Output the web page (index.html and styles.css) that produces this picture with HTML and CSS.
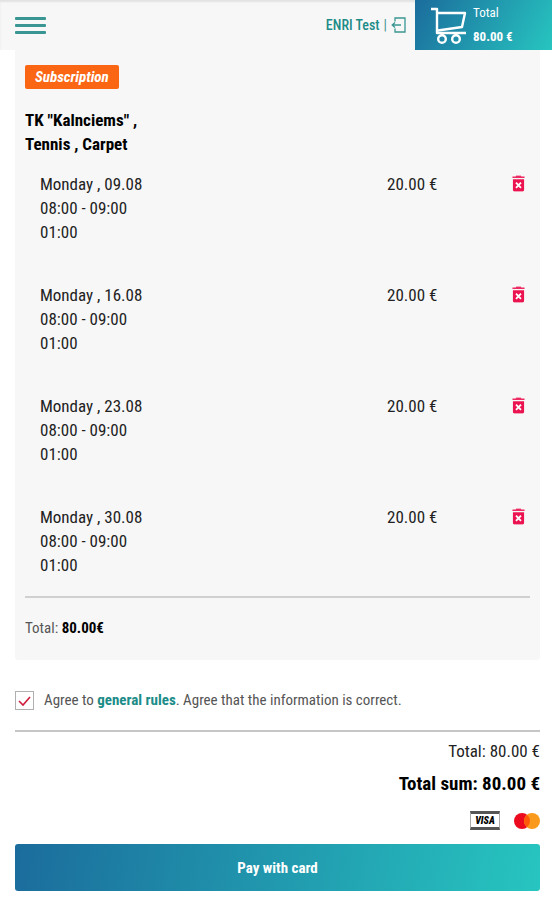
FILE: index.html
```html
<!DOCTYPE html>
<html lang="en">
<head>
	<meta charset="UTF-8">
	<meta name="viewport" content="width=device-width, initial-scale=1.0">
	<title>Cart</title>
	<link rel="stylesheet" href="styles.css">
</head>
<body>

	<header class="header">
		<button class="menu_btn" type="button" aria-label="Menu">
			<span></span>
			<span></span>
			<span></span>
		</button>
		<div class="user">
			<a href="#" class="user_name">ENRI Test</a>
			<span>|</span>
			<a href="#" class="logout" aria-label="Log out">
				<svg width="15" height="16" viewBox="0 0 15 16" fill="none" stroke="#3a9692" stroke-width="1.3">
					<path d="M4 4.5V1H14V15H4V11.5"/>
					<path d="M10 8H1M4 5.5L1.2 8L4 10.5"/>
				</svg>
			</a>
		</div>
		<a href="#" class="cart">
			<svg width="36" height="37" viewBox="0 0 36 37" fill="none" stroke="#fff" stroke-width="2.4" stroke-linejoin="round">
				<path d="M0 2H6V26H35"/>
				<path d="M6 6H34L31 20L7 23.5"/>
				<circle cx="11" cy="32" r="3.8"/>
				<circle cx="25" cy="32" r="3.8"/>
				<path d="M11 28V26M25 28V26"/>
			</svg>
			<span class="cart_text">
				<span>Total</span>
				<b>80.00 €</b>
			</span>
		</a>
	</header>

	<main class="content">
		<section class="card">
			<span class="badge">Subscription</span>
			<h3 class="card_title">TK "Kalnciems" ,<br>Tennis , Carpet</h3>
			<table class="orders">
				<tbody>
					<tr>
						<td>Monday , 09.08<br>08:00 - 09:00<br>01:00</td>
						<td class="price">20.00 €</td>
						<td class="del"><button class="del_btn" type="button" aria-label="Delete"><svg width="13" height="17" viewBox="0 0 14 18"><use href="#trash"/></svg></button></td>
					</tr>
					<tr>
						<td>Monday , 16.08<br>08:00 - 09:00<br>01:00</td>
						<td class="price">20.00 €</td>
						<td class="del"><button class="del_btn" type="button" aria-label="Delete"><svg width="13" height="17" viewBox="0 0 14 18"><use href="#trash"/></svg></button></td>
					</tr>
					<tr>
						<td>Monday , 23.08<br>08:00 - 09:00<br>01:00</td>
						<td class="price">20.00 €</td>
						<td class="del"><button class="del_btn" type="button" aria-label="Delete"><svg width="13" height="17" viewBox="0 0 14 18"><use href="#trash"/></svg></button></td>
					</tr>
					<tr>
						<td>Monday , 30.08<br>08:00 - 09:00<br>01:00</td>
						<td class="price">20.00 €</td>
						<td class="del"><button class="del_btn" type="button" aria-label="Delete"><svg width="13" height="17" viewBox="0 0 14 18"><use href="#trash"/></svg></button></td>
					</tr>
				</tbody>
			</table>
			<div class="card_total">Total: <b>80.00€</b></div>
		</section>

		<div class="agree">
			<input id="agree" type="checkbox" checked>
			<label for="agree">Agree to <a href="#">general rules</a>. Agree that the information is correct.</label>
		</div>

		<div class="summary">
			<div class="summary_total">Total: 80.00 €</div>
			<div class="summary_sum">Total sum: 80.00 €</div>
			<div class="payments">
				<span class="visa">VISA</span>
				<svg width="26" height="18" viewBox="0 0 26 18" role="img" aria-label="Mastercard">
					<circle cx="8" cy="9" r="8" fill="#eb0a1e"/>
					<circle cx="18" cy="9" r="8" fill="#f99a1c"/>
					<path d="M13 2.8a8 8 0 0 1 0 12.4a8 8 0 0 1 0-12.4z" fill="#ff5a0a"/>
				</svg>
			</div>
		</div>

		<button class="pay_btn" type="button">Pay with card</button>
	</main>

	<svg width="0" height="0" class="icons">
		<symbol id="trash" viewBox="0 0 14 18">
			<path d="M4.5 0.5H9.5L10 1.5H13.5V3.2H0.5V1.5H4z" fill="#ee2a62"/>
			<path d="M1 4.3H13V16Q13 17.5 11.5 17.5H2.5Q1 17.5 1 16z" fill="#ec1450"/>
			<path d="M4.3 8L9.7 13.6M9.7 8L4.3 13.6" stroke="#fff" stroke-width="2"/>
		</symbol>
	</svg>

</body>
</html>
```
FILE: styles.css
```css
body{
	font-family: "Roboto Condensed", Roboto, sans-serif;
	font-size: 17px;
	line-height: 24px;
	color: #222;
	margin: 0;
	background: white;
}
button{
	font-family: inherit;
	border: 0;
	padding: 0;
	cursor: pointer;
}
a{
	color: #1b8c88;
	text-decoration: none;
}
.header{
	display: flex;
	align-items: center;
	height: 50px;
	padding-left: 15px;
	background: #f7f7f7;
	box-shadow: inset 0 2px 2px #e2e2e2;
}
.menu_btn{
	display: flex;
	flex-direction: column;
	gap: 4px;
	width: 31px;
	background: none;
}
.menu_btn span{
	height: 3px;
	border-radius: 1px;
	background: #3a9692;
}
.user{
	display: flex;
	align-items: center;
	gap: 4px;
	margin-left: auto;
	margin-right: 9px;
	font-size: 14px;
	color: #3a9692;
}
.user_name{
	font-weight: 500;
}
.logout{
	display: flex;
}
.cart{
	display: flex;
	align-items: center;
	gap: 6px;
	box-sizing: border-box;
	width: 137px;
	height: 50px;
	padding-left: 16px;
	color: white;
	font-size: 13px;
	background: linear-gradient(120deg, #1b6c9c, #27c5c0);
}
.cart_text{
	display: flex;
	flex-direction: column;
}
.content{
	padding: 0 12px 8px 15px;
}
.card{
	padding: 15px 10px 20px;
	background: #f7f7f7;
	border-radius: 0 0 3px 3px;
}
.badge{
	display: block;
	width: fit-content;
	padding: 0 10px;
	border-radius: 2px;
	background: #fa6613;
	color: white;
	font-size: 15px;
	font-weight: 700;
	font-style: italic;
}
.card_title{
	margin: 19px 0 16px;
	color: black;
	font-size: 17px;
}
.orders{
	width: 100%;
	border-spacing: 0;
	border-bottom: 2px solid #d0d0d0;
}
.orders td{
	padding: 0 0 39px 15px;
	vertical-align: top;
}
.orders tr:last-child td{
	padding-bottom: 19px;
}
.orders .price{
	width: 103px;
}
.orders .del{
	width: 20px;
	padding-right: 5px;
	text-align: right;
}
.del_btn{
	background: none;
	vertical-align: top;
}
.del_btn svg{
	display: block;
	margin-top: 3px;
}
.card_total{
	margin-top: 18px;
	font-size: 15px;
	color: #555;
}
.card_total b{
	color: black;
}
.agree{
	display: flex;
	align-items: center;
	gap: 10px;
	margin: 28px 0 18px;
	font-size: 15px;
	color: #555;
}
.agree input{
	appearance: none;
	box-sizing: border-box;
	width: 19px;
	height: 19px;
	margin: 0;
	border: 1px solid #b0b0b0;
	background: url("data:image/svg+xml,%3Csvg xmlns='http://www.w3.org/2000/svg' viewBox='0 0 17 17'%3E%3Cpath d='M3 9l4 4 7-8' fill='none' stroke='%23d01c3c' stroke-width='1.6'/%3E%3C/svg%3E");
}
.agree input:not(:checked){
	background: white;
}
.agree a{
	font-weight: 700;
}
.summary{
	border-top: 2px solid #c6c6c6;
	padding-top: 7px;
	text-align: right;
}
.summary_sum{
	margin-top: 9px;
	color: black;
	font-size: 19px;
	font-weight: 700;
}
.payments{
	display: flex;
	justify-content: flex-end;
	align-items: center;
	gap: 14px;
	margin: 15px 0 14px;
}
.visa{
	box-sizing: border-box;
	width: 30px;
	height: 19px;
	border: 1px solid #aaa;
	border-width: 3px 1px;
	border-top-color: #555;
	border-bottom-color: #555;
	color: black;
	font-size: 10px;
	font-weight: 900;
	font-style: italic;
	line-height: 13px;
	text-align: center;
}
.pay_btn{
	display: block;
	width: 100%;
	height: 47px;
	border-radius: 3px;
	background: linear-gradient(100deg, #1b6c9c, #27c5c0);
	color: white;
	font-size: 15px;
	font-weight: 700;
}
.icons{
	position: absolute;
}
```
